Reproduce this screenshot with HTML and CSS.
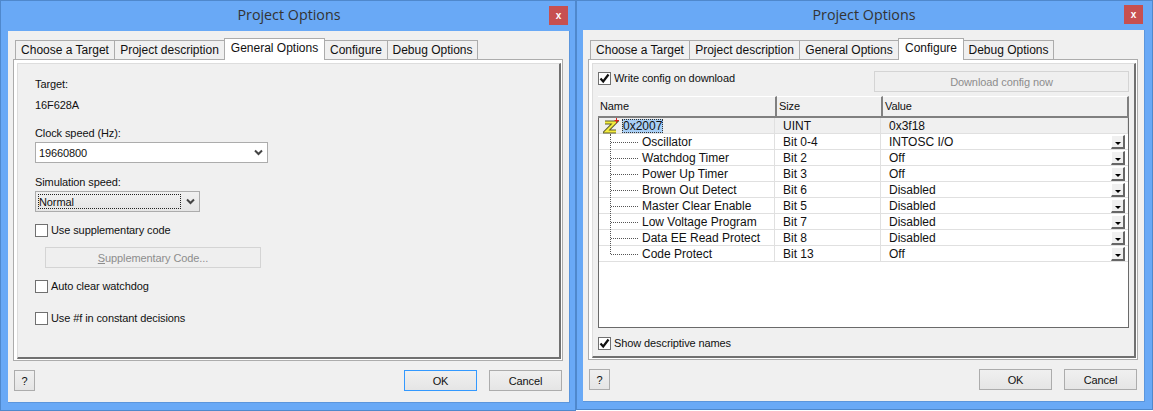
FILE: index.html
```html
<!DOCTYPE html>
<html lang="en">
<head>
  <meta charset="UTF-8">
  <title>Project Options</title>
  <link rel="stylesheet" href="styles.css">
</head>
<body>

  <!-- General Options dialog -->
  <div class="dialog dialog-left">
    <div class="titlebar">
      <span></span>
      <span class="title">Project Options</span>
      <button class="close">x</button>
    </div>
    <div class="client">
      <div class="tabs">
        <div class="tab tab-target">Choose a Target</div>
        <div class="tab tab-desc">Project description</div>
        <div class="tab tab-general active">General Options</div>
        <div class="tab tab-config">Configure</div>
        <div class="tab tab-debug">Debug Options</div>
      </div>
      <div class="panel">
        <div class="panel-inner general">
          <div class="text">Target:</div>
          <div class="text target-name">16F628A</div>
          <div class="text clock-label">Clock speed (Hz):</div>
          <div class="combo clock-combo">
            <span>19660800</span>
            <svg class="chevron" width="9" height="7" viewBox="0 0 9 7"><path d="M1 1.5 L4.5 5 L8 1.5" fill="none" stroke="#444" stroke-width="2"/></svg>
          </div>
          <div class="text sim-label">Simulation speed:</div>
          <div class="combo sim-combo">
            <span class="focus-box">Normal</span>
            <svg class="chevron" width="9" height="7" viewBox="0 0 9 7"><path d="M1 1.5 L4.5 5 L8 1.5" fill="none" stroke="#444" stroke-width="2"/></svg>
          </div>
          <label class="check check-supp"><span class="box"></span>Use supplementary code</label>
          <button class="btn btn-supp" disabled><u>S</u>upplementary Code...</button>
          <label class="check check-auto"><span class="box"></span>Auto clear watchdog</label>
          <label class="check check-hash"><span class="box"></span>Use #f in constant decisions</label>
        </div>
      </div>
      <div class="footer">
        <button class="btn btn-help">?</button>
        <button class="btn btn-ok focused">OK</button>
        <button class="btn btn-cancel">Cancel</button>
      </div>
    </div>
  </div>

  <!-- Configure dialog -->
  <div class="dialog dialog-right">
    <div class="titlebar">
      <span></span>
      <span class="title">Project Options</span>
      <button class="close">x</button>
    </div>
    <div class="client">
      <div class="tabs">
        <div class="tab tab-target">Choose a Target</div>
        <div class="tab tab-desc">Project description</div>
        <div class="tab tab-general">General Options</div>
        <div class="tab tab-config active">Configure</div>
        <div class="tab tab-debug">Debug Options</div>
      </div>
      <div class="panel">
        <div class="panel-inner configure">
          <div class="config-top">
            <label class="check"><span class="box"><svg width="11" height="11" viewBox="0 0 11 11"><path d="M1.5 5.5 L4.2 8.5 L9.5 1.5" fill="none" stroke="#111" stroke-width="2.2"/></svg></span>Write config on download</label>
            <button class="btn btn-download" disabled>Download config now</button>
          </div>
          <div class="grid-head">
            <div class="head-cell">Name</div>
            <div class="head-cell">Size</div>
            <div class="head-cell">Value</div>
          </div>
          <div class="tree">
            <div class="row row-root">
              <div class="cell cell-name">
                <svg class="z-icon" width="16" height="16" viewBox="0 0 16 16">
                  <path d="M2 4.5 H12 L3 13.5 H13" fill="none" stroke="#5a5a2c" stroke-width="4"/>
                  <path d="M2 4.5 H12 L3 13.5 H13" fill="none" stroke="#f4ec3c" stroke-width="2"/>
                  <path d="M11.5 2.5 H16 M13.5 0 V5" stroke="#e02020" stroke-width="1"/>
                </svg>
                <span class="selected">0x2007</span>
              </div>
              <div class="cell">UINT</div>
              <div class="cell">0x3f18</div>
            </div>
            <div class="branches" id="branches"></div>
          </div>
          <label class="check check-names"><span class="box"><svg width="11" height="11" viewBox="0 0 11 11"><path d="M1.5 5.5 L4.2 8.5 L9.5 1.5" fill="none" stroke="#111" stroke-width="2.2"/></svg></span>Show descriptive names</label>
        </div>
      </div>
      <div class="footer">
        <button class="btn btn-help">?</button>
        <button class="btn btn-ok">OK</button>
        <button class="btn btn-cancel">Cancel</button>
      </div>
    </div>
  </div>

  <script>
    var bits = [
      ["Oscillator", "Bit 0-4", "INTOSC I/O"],
      ["Watchdog Timer", "Bit 2", "Off"],
      ["Power Up Timer", "Bit 3", "Off"],
      ["Brown Out Detect", "Bit 6", "Disabled"],
      ["Master Clear Enable", "Bit 5", "Disabled"],
      ["Low Voltage Program", "Bit 7", "Disabled"],
      ["Data EE Read Protect", "Bit 8", "Disabled"],
      ["Code Protect", "Bit 13", "Off"]
    ];
    var html = "";
    bits.forEach(function (b) {
      html += '<div class="row">' +
        '<div class="cell cell-name"><span class="branch"></span>' + b[0] + '</div>' +
        '<div class="cell">' + b[1] + '</div>' +
        '<div class="cell cell-value">' + b[2] + '<span class="drop"></span></div>' +
        '</div>';
    });
    document.getElementById("branches").innerHTML = html;
  </script>
</body>
</html>
```

FILE: styles.css
```css
body {
  margin: 0;
  width: 1153px;
  height: 411px;
  overflow: hidden;
  display: flex;
  align-items: flex-start;
  background: #fff;
  font-family: "Liberation Sans", Arial, sans-serif;
  font-size: 11px;
  letter-spacing: -.1px;
  color: #111;
}
button {
  font-family: inherit;
  font-size: 11px;
  letter-spacing: inherit;
  color: #111;
  padding: 0;
}
.dialog {
  box-sizing: border-box;
  background: #69a9f6;
  border: 1px solid #4f88cc;
}
.dialog-left {
  width: 576px;
  height: 411px;
  padding: 0 5px 0 7px;
}
.dialog-right {
  width: 577px;
  height: 410px;
  padding: 0 7px 0 6px;
}
.titlebar {
  display: grid;
  grid-template-columns: 1fr auto 1fr;
  align-items: start;
  height: 30px;
}
.dialog-right .titlebar {
  height: 29px;
}
.title {
  font-family: "Open Sans", sans-serif;
  font-size: 14.3px;
  letter-spacing: 0;
  line-height: 28px;
  color: #333;
}
.close {
  justify-self: end;
  width: 19px;
  height: 19px;
  margin-top: 5px;
  margin-right: 2px;
  border: none;
  background: #c75050;
  color: #fff;
  font-weight: bold;
  font-size: 10px;
  line-height: 17px;
}
.dialog-right .close {
  margin-top: 4px;
}
.client {
  height: 372px;
  box-sizing: border-box;
  padding: 7px 6px 0 5px;
  background: #f0f0f0;
  border-right: 1px solid #5c96dc;
  border-bottom: 1px solid #5c96dc;
}
.dialog-right .client {
  padding-top: 8px;
}

/* tabs */
.tabs {
  display: flex;
  align-items: flex-end;
  height: 22px;
  padding-left: 2px;
  margin-bottom: -1px;
  font-size: 12px;
  letter-spacing: 0;
}
.tab {
  box-sizing: border-box;
  height: 19px;
  margin-bottom: 1px;
  margin-right: -1px;
  border: 1px solid #acacac;
  border-bottom: none;
  background: #f0f0f0;
  text-align: center;
  line-height: 19px;
}
.tab.active {
  position: relative;
  z-index: 1;
  height: 22px;
  margin-bottom: 0;
  background: #fff;
  line-height: 18px;
}
.tab-target { width: 100px; }
.tab-desc { width: 111px; }
.tab-general { width: 100px; }
.tab-config { width: 64px; }
.tab-debug { width: 91px; }
.dialog-left .tab-general { width: 101px; }
.dialog-right .tab-config { width: 66px; }

/* panel with its double edge */
.panel {
  box-sizing: border-box;
  height: 302px;
  border: 1px solid #acacac;
  padding: 3px 1px 1px 3px;
  background: #fff;
}
.dialog-right .panel {
  height: 301px;
}
.panel-inner {
  box-sizing: border-box;
  height: 100%;
  background: #f0f0f0;
  border-top: 1px solid #ddd;
  border-left: 1px solid #ddd;
  border-right: 2px solid #707070;
  border-bottom: 2px solid #707070;
}

/* general options */
.general {
  padding: 13px 0 0 17px;
}
.text {
  line-height: 14px;
}
.target-name { margin-top: 7px; }
.clock-label { margin-top: 14px; }
.sim-label { margin-top: 12px; }
.combo {
  box-sizing: border-box;
  display: flex;
  align-items: center;
  justify-content: space-between;
  height: 21px;
  margin-top: 2px;
  border: 1px solid #acacac;
}
.clock-combo {
  width: 233px;
  padding: 0 4px 0 3px;
  background: #fff;
}
.sim-combo {
  width: 165px;
  padding: 0 4px 0 2px;
  background: linear-gradient(#f0f0f0, #e5e5e5);
}
.focus-box {
  box-sizing: border-box;
  width: 143px;
  height: 15px;
  border: 1px dotted #222;
  line-height: 14px;
}
.check {
  display: flex;
  align-items: center;
  gap: 3px;
  height: 14px;
}
.box {
  box-sizing: border-box;
  display: flex;
  align-items: center;
  justify-content: center;
  width: 13px;
  height: 13px;
  border: 1px solid #707070;
  background: #fff;
}
.check-supp { margin-top: 11px; }
.check-auto { margin-top: 11px; }
.check-hash { margin-top: 18px; }

/* buttons */
.btn {
  box-sizing: border-box;
  height: 21px;
  border: 1px solid #acacac;
  background: linear-gradient(#f0f0f0, #e5e5e5);
}
.btn:disabled {
  border-color: #d4d4d4;
  background: #efefef;
  color: #8d8d8d;
}
.btn-supp {
  display: block;
  width: 216px;
  margin: 10px 0 0 10px;
}
.btn-help { width: 21px; margin-right: auto; }
.btn-ok { width: 73px; }
.btn-cancel { width: 73px; margin-left: 12px; }
.focused { border-color: #3399ff; }
.footer {
  display: flex;
  padding: 9px 1px 0 1px;
}

/* configure */
.configure {
  padding: 7px 5px 0 5px;
}
.config-top {
  display: flex;
  justify-content: space-between;
  align-items: flex-start;
}
.btn-download {
  width: 255px;
}
.grid-head {
  display: grid;
  grid-template-columns: 179px 106px 1fr;
  height: 20px;
  margin-top: 4px;
}
.head-cell {
  box-sizing: border-box;
  padding-left: 2px;
  line-height: 19px;
  background: #f0f0f0;
  border-bottom: 2px solid #808080;
  border-right: 2px solid #808080;
  border-top: 1px solid #fff;
}
.tree {
  box-sizing: border-box;
  height: 211px;
  margin-top: 1px;
  border: 1px solid #6a6a6a;
  background: #fff;
  font-size: 12px;
  letter-spacing: 0;
}
.row {
  display: grid;
  grid-template-columns: 176px 106px 1fr;
  height: 16px;
  box-sizing: border-box;
  border-bottom: 1px solid #e0e0e0;
}
.row-root {
  background: #f0f0f0;
}
.cell {
  box-sizing: border-box;
  display: flex;
  align-items: center;
  height: 15px;
  padding: 1px 0 0 8px;
  border-right: 1px solid #e0e0e0;
  line-height: 14px;
}
.cell-value {
  justify-content: space-between;
  border-right: none;
  padding-right: 3px;
}
.cell-name {
  padding-left: 0;
}
.z-icon {
  flex: none;
  margin: -1px 0 0 4px;
}
.selected {
  margin-left: 3px;
  padding: 0 1px;
  background: #a9cff5;
  outline: 1px dotted #333;
  outline-offset: -1px;
}
.branches {
  position: relative;
}
.branches::before {
  content: "";
  position: absolute;
  left: 11px;
  top: 0;
  bottom: 8px;
  border-left: 1px dotted #555;
}
.branch {
  width: 27px;
  height: 0;
  margin: 0 4px 0 12px;
  border-top: 1px dotted #555;
}
.drop {
  box-sizing: border-box;
  display: flex;
  align-items: flex-end;
  justify-content: center;
  width: 14px;
  height: 14px;
  padding-bottom: 2px;
  background: #f0f0f0;
  border-top: 1px solid #fff;
  border-left: 1px solid #fff;
  border-right: 2px solid #666;
  border-bottom: 2px solid #666;
}
.drop::after {
  content: "";
  border: 3px solid transparent;
  border-top-color: #000;
  border-bottom-width: 0;
}
.check-names {
  margin-top: 8px;
}
```
